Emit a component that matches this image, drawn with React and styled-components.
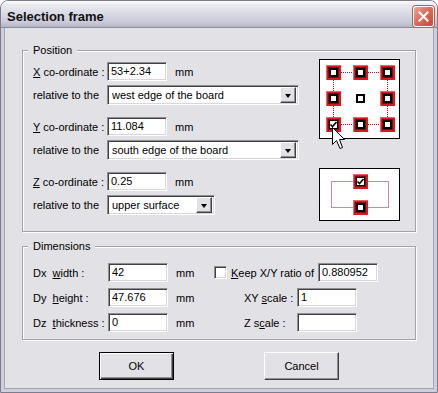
import React from 'react'
import styled, {createGlobalStyle, css} from 'styled-components'

const FACE = '#e2e1e5'

const GlobalStyle = createGlobalStyle`
  html, body {
    margin: 0;
    background: #ffffff;
  }
  body {
    font-family: 'Liberation Sans', Arial, sans-serif;
    font-size: 11px;
    color: #000;
  }
`

const sunken = css`
  box-sizing: border-box;
  border-style: solid;
  border-width: 1px;
  border-color: #8e8e94 #ffffff #ffffff #8e8e94;
  box-shadow: inset 1px 1px 0 #404040, inset -1px -1px 0 #d8d7dc;
  background: #fff;
`

const raised = css`
  box-sizing: border-box;
  border-style: solid;
  border-width: 1px;
  border-color: #ffffff #404040 #404040 #ffffff;
  box-shadow: inset -1px -1px 0 #8e8e94;
  background: ${FACE};
`

const Window = styled.div`
  width: 438px;
  height: 393px;
  box-sizing: border-box;
  display: flex;
  flex-direction: column;
  border: 1px solid #7c7c8e;
  border-radius: 8px 8px 0 0;
  overflow: hidden;
  background: ${FACE};
`

const TitleBar = styled.div`
  height: 27px;
  flex-shrink: 0;
  display: flex;
  align-items: flex-start;
  padding: 5px 3px 0 6px;
  box-sizing: border-box;
  border-bottom: 1px solid #8c8ca0;
  background: linear-gradient(#ffffff 0%, #ececf2 12%, #dcdce6 45%, #cbcbd9 80%, #b4b4c6 100%);
`

const Title = styled.div`
  font-weight: bold;
  font-size: 13px;
  line-height: 21px;
  color: #111;
`

const CloseButton = styled.div`
  margin-left: auto;
  width: 21px;
  height: 21px;
  box-sizing: border-box;
  border: 1px solid #fff;
  border-radius: 3px;
  background: linear-gradient(135deg, #f0a898 0%, #df6e5c 45%, #c8483a 100%);
  box-shadow: 0 0 0 1px #a06860;
  display: flex;
  align-items: center;
  justify-content: center;
`

const Body = styled.div`
  flex: 1;
  display: flex;
  flex-direction: column;
  padding: 16px 18px 0 18px;
  border: 3px solid #cfcfdb;
  border-top: none;
  box-shadow: inset 1px 0 0 #a4a4b4, inset -1px 0 0 #a4a4b4, inset 0 -1px 0 #a4a4b4;
`

const Group = styled.fieldset`
  margin: ${p => p.$top || 0}px 0 0 0;
  padding: ${p => p.$pad};
  border: 1px solid #a3a2a8;
  box-shadow: inset 1px 1px 0 #ffffff, 1px 1px 0 #ffffff;
  min-width: 0;
`

const Legend = styled.legend`
  padding: 0 5px;
  margin-left: -5px;
  line-height: 12px;
  font-size: 11px;
  background: ${FACE};
`

const PositionLayout = styled.div`
  display: flex;
  align-items: flex-start;
`

const FieldColumn = styled.div`
  display: flex;
  flex-direction: column;
  gap: ${p => p.$gap}px;
  width: ${p => p.$width ? `${p.$width}px` : 'auto'};
  flex-shrink: 0;
`

const CoordBlock = styled.div`
  display: flex;
  flex-direction: column;
  gap: 4px;
`

const FieldRow = styled.div`
  display: flex;
  align-items: center;
  height: ${p => p.$height || 19}px;
  padding-left: ${p => p.$indent || 0}px;
`

const Label = styled.span`
  width: ${p => p.$width}px;
  flex-shrink: 0;
  white-space: nowrap;
`

const TextBox = styled.div`
  ${sunken};
  width: ${p => p.$width || 60}px;
  height: 19px;
  padding: 0 3px;
  line-height: 17px;
  white-space: nowrap;
  overflow: hidden;
`

const Unit = styled.span`
  margin-left: 8px;
`

const Select = styled.div`
  ${sunken};
  width: ${p => p.$width}px;
  height: 20px;
  display: flex;
  align-items: center;
  padding: 2px 2px 2px 4px;
`

const SelectText = styled.span`
  flex: 1;
  white-space: nowrap;
`

const DropButton = styled.div`
  ${raised};
  width: 16px;
  height: 16px;
  display: flex;
  align-items: center;
  justify-content: center;

  &::after {
    content: '';
    border-left: 3.5px solid transparent;
    border-right: 3.5px solid transparent;
    border-top: 4px solid #000;
    margin-top: 1px;
  }
`

const WidgetColumn = styled.div`
  position: relative;
  margin-left: auto;
  margin-top: -3px;
  display: flex;
  flex-direction: column;
  gap: 29px;
`

const Cursor = styled.svg`
  position: absolute;
  left: 13px;
  top: 68px;
`

const DimLayout = styled.div`
  display: flex;
`

const CheckBox = styled.div`
  ${sunken};
  width: 13px;
  height: 13px;
  margin-right: 4px;
  flex-shrink: 0;
`

const ButtonRow = styled.div`
  display: flex;
  justify-content: center;
  gap: 90px;
  margin-top: 12px;
`

const Button = styled.div`
  ${raised};
  width: 75px;
  height: 28px;
  display: flex;
  align-items: center;
  justify-content: center;
  font-size: 11px;
  ${p => p.$default && css`
    border-color: #000;
    box-shadow: inset 1px 1px 0 #fff, inset -1px -1px 0 #404040, inset -2px -2px 0 #8e8e94;
  `}
`

const RED = '#d51b22'
const DOT = '#961a30'

const Pad = ({x, y, checked, plain}) => {
  if (plain) {
    return (
      <g>
        <rect x={x + 3} y={y + 3} width={9} height={9} fill="#000"/>
        <rect x={x + 5} y={y + 5} width={5} height={5} fill="#fff"/>
      </g>
    )
  }
  return (
    <g>
      <rect x={x} y={y} width={15} height={15} fill={RED}/>
      <rect x={x} y={y} width={15} height={1} fill="#e86464"/>
      <rect x={x} y={y} width={1} height={15} fill="#e86464"/>
      <rect x={x + 2} y={y + 2} width={11} height={11} fill="#7e0d12"/>
      <rect x={x + 3} y={y + 3} width={9} height={9} fill="#000"/>
      {checked ? (
        <>
          <rect x={x + 4} y={y + 4} width={7} height={7} fill="#fff"/>
          <path
            d={`M${x + 4.5} ${y + 7.5} L${x + 6.5} ${y + 9.5} L${x + 10.5} ${y + 5}`}
            fill="none"
            stroke="#000"
            strokeWidth="1.6"/>
        </>
      ) : (
        <rect x={x + 5} y={y + 5} width={5} height={5} fill="#fff"/>
      )}
    </g>
  )
}

const CornerPicker = () => {
  const cols = [7, 34, 61]
  const rows = [6, 32, 58]
  return (
    <svg width="81" height="80" viewBox="0 0 81 80">
      <rect x="0.5" y="0.5" width="80" height="79" fill="#fff" stroke="#000"/>
      {[rows[0], rows[2]].map(r => (
        <g key={r}>
          <line x1="22" y1={r + 7.5} x2="34" y2={r + 7.5} stroke={DOT} strokeDasharray="1 1"/>
          <line x1="49" y1={r + 7.5} x2="61" y2={r + 7.5} stroke={DOT} strokeDasharray="1 1"/>
        </g>
      ))}
      {[cols[0], cols[2]].map(c => (
        <g key={c}>
          <line x1={c + 7.5} y1="21" x2={c + 7.5} y2="32" stroke={DOT} strokeDasharray="1 1"/>
          <line x1={c + 7.5} y1="47" x2={c + 7.5} y2="58" stroke={DOT} strokeDasharray="1 1"/>
        </g>
      ))}
      {rows.map((r, ri) => cols.map((c, ci) => (
        <Pad
          key={`${ri}-${ci}`}
          x={c}
          y={r}
          plain={ri === 1 && ci === 1}
          checked={ri === 2 && ci === 0}/>
      )))}
    </svg>
  )
}

const LevelPicker = () => (
  <svg width="81" height="53" viewBox="0 0 81 53">
    <rect x="0.5" y="0.5" width="80" height="52" fill="#fff" stroke="#000"/>
    <rect x="12.5" y="13.5" width="57" height="26" fill="none" stroke={DOT} strokeDasharray="1 1"/>
    <Pad x={34} y={6} checked/>
    <Pad x={34} y={32}/>
  </svg>
)

const Coord = ({axis, value, relative, selectWidth}) => (
  <CoordBlock>
    <FieldRow>
      <Label $width={74}><u>{axis}</u> co-ordinate :</Label>
      <TextBox>{value}</TextBox>
      <Unit>mm</Unit>
    </FieldRow>
    <FieldRow $height={20}>
      <Label $width={74}>relative to the</Label>
      <Select $width={selectWidth}>
        <SelectText>{relative}</SelectText>
        <DropButton/>
      </Select>
    </FieldRow>
  </CoordBlock>
)

const App = () => {
  return (
    <>
      <GlobalStyle/>
      <Window>
        <TitleBar>
          <Title>Selection frame</Title>
          <CloseButton>
            <svg width="11" height="11" viewBox="0 0 11 11">
              <path d="M1.5 1.5 L9.5 9.5 M9.5 1.5 L1.5 9.5" stroke="#fff" strokeWidth="2" strokeLinecap="square"/>
            </svg>
          </CloseButton>
        </TitleBar>
        <Body>
          {/* position */}
          <Group $pad="6px 15px 10px 10px">
            <Legend>Position</Legend>
            <PositionLayout>
              <FieldColumn $gap={12}>
                <Coord axis="X" value="53+2.34" relative="west edge of the board" selectWidth={192}/>
                <Coord axis="Y" value="11.084" relative="south edge of the board" selectWidth={192}/>
                <Coord axis="Z" value="0.25" relative="upper surface" selectWidth={108}/>
              </FieldColumn>
              <WidgetColumn>
                <CornerPicker/>
                <LevelPicker/>
                <Cursor width="14" height="23" viewBox="0 0 14 23">
                  <path
                    d="M0.5 0.5 L0.5 17.5 L4.5 13.5 L8 21.5 L10.5 20.5 L7.5 12.5 L12.5 12.5 Z"
                    fill="#fff"
                    stroke="#000"/>
                </Cursor>
              </WidgetColumn>
            </PositionLayout>
          </Group>
          {/* end of position */}
          {/* dimensions */}
          <Group $top={8} $pad="11px 10px 7px 10px">
            <Legend>Dimensions</Legend>
            <DimLayout>
              <FieldColumn $gap={6} $width={181}>
                <FieldRow>
                  <Label $width={75}>Dx&nbsp; <u>w</u>idth :</Label>
                  <TextBox>42</TextBox>
                  <Unit>mm</Unit>
                </FieldRow>
                <FieldRow>
                  <Label $width={75}>Dy&nbsp; <u>h</u>eight :</Label>
                  <TextBox>47.676</TextBox>
                  <Unit>mm</Unit>
                </FieldRow>
                <FieldRow>
                  <Label $width={75}>Dz&nbsp; <u>t</u>hickness :</Label>
                  <TextBox>0</TextBox>
                  <Unit>mm</Unit>
                </FieldRow>
              </FieldColumn>
              <FieldColumn $gap={6}>
                <FieldRow>
                  <CheckBox/>
                  <Label $width={87}><u>K</u>eep X/Y ratio of</Label>
                  <TextBox>0.880952</TextBox>
                </FieldRow>
                <FieldRow $indent={30}>
                  <Label $width={53}>XY <u>s</u>cale :</Label>
                  <TextBox>1</TextBox>
                </FieldRow>
                <FieldRow $indent={30}>
                  <Label $width={53}>Z s<u>c</u>ale :</Label>
                  <TextBox/>
                </FieldRow>
              </FieldColumn>
            </DimLayout>
          </Group>
          {/* end of dimensions */}
          <ButtonRow>
            <Button $default>OK</Button>
            <Button>Cancel</Button>
          </ButtonRow>
        </Body>
      </Window>
    </>
  )
}

export default App
